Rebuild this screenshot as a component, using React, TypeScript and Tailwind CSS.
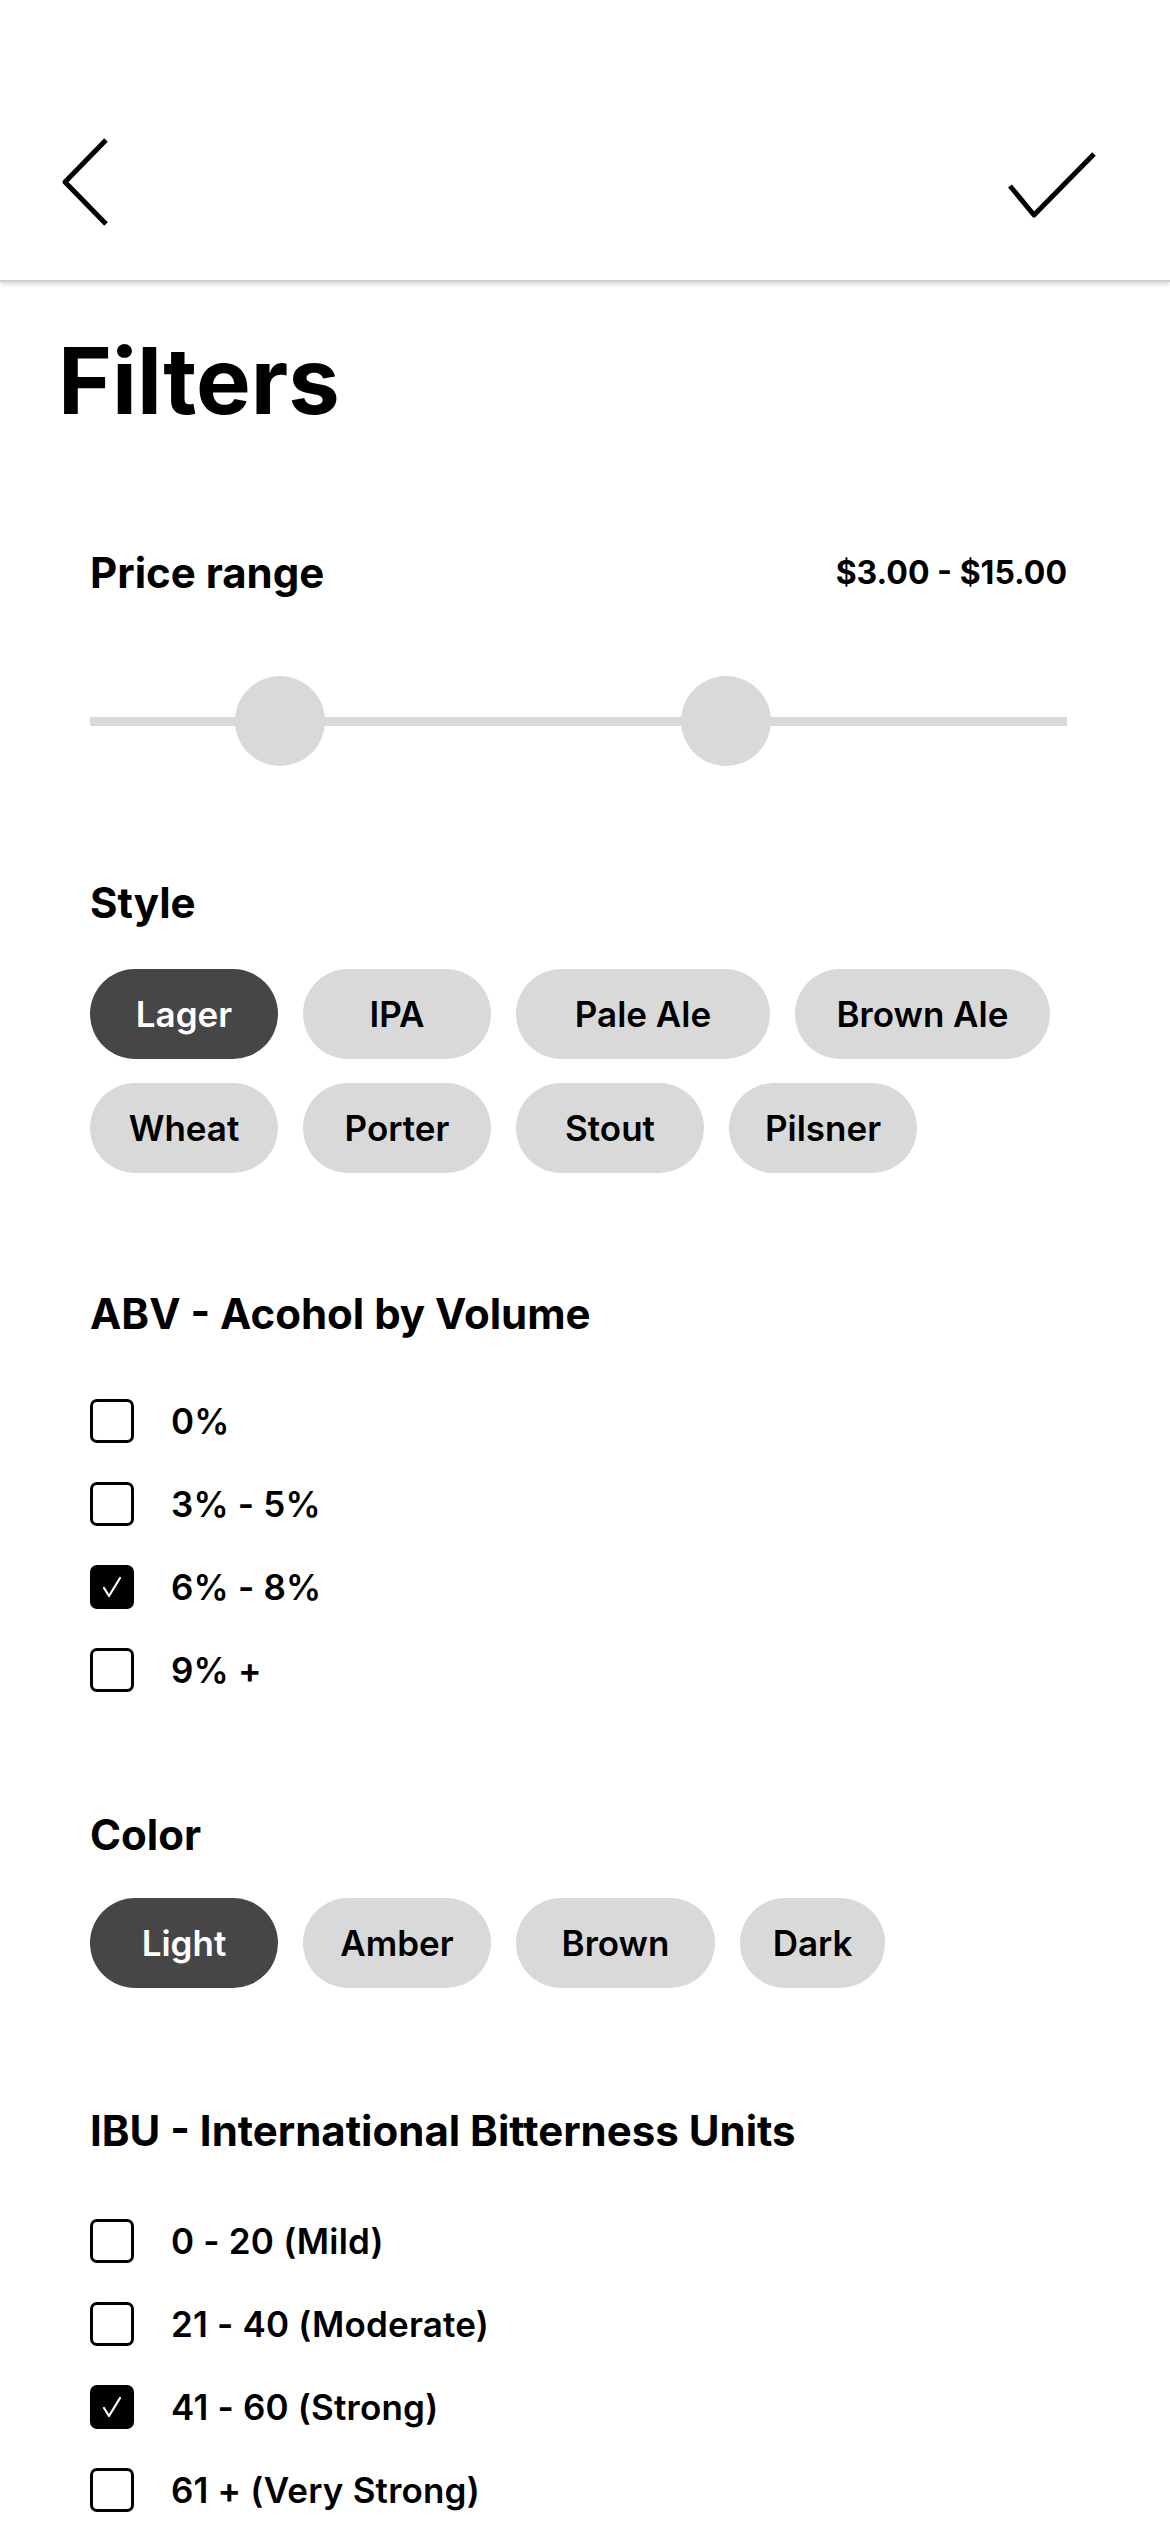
import { useState } from 'react'

const styles = [
  { label: 'Lager', w: 'w-[188px]' },
  { label: 'IPA', w: 'w-[188px]' },
  { label: 'Pale Ale', w: 'w-[254px]' },
  { label: 'Brown Ale', w: 'w-[255px]' },
  { label: 'Wheat', w: 'w-[188px]' },
  { label: 'Porter', w: 'w-[188px]' },
  { label: 'Stout', w: 'w-[188px]' },
  { label: 'Pilsner', w: 'w-[188px]' },
]

const colors = [
  { label: 'Light', w: 'w-[188px]' },
  { label: 'Amber', w: 'w-[188px]' },
  { label: 'Brown', w: 'w-[199px]' },
  { label: 'Dark', w: 'w-[145px]' },
]

const abv = ['0%', '3% - 5%', '6% - 8%', '9% +']
const ibu = ['0 - 20 (Mild)', '21 - 40 (Moderate)', '41 - 60 (Strong)', '61 + (Very Strong)']

function Chip({ label, w, active, onClick }: { label: string; w: string; active: boolean; onClick: () => void }) {
  return (
    <button
      onClick={onClick}
      className={`${w} h-[90px] rounded-full flex items-center justify-center text-[35px] font-semibold leading-none ${
        active ? 'bg-[#464646] text-white' : 'bg-[#d9d9d9] text-black'
      }`}
    >
      {label}
    </button>
  )
}

function CheckRow({ label, checked, onClick }: { label: string; checked: boolean; onClick: () => void }) {
  return (
    <button onClick={onClick} className="flex items-center gap-[37px] h-[44px] text-left">
      <span
        className={`w-[44px] h-[44px] rounded-[7px] border-[3px] border-black flex items-center justify-center shrink-0 ${
          checked ? 'bg-black' : 'bg-white'
        }`}
      >
        {checked && (
          <svg width="22" height="24" viewBox="0 0 22 24" fill="none">
            <path d="M3 13l5 8L19 3" stroke="white" strokeWidth="2.2" strokeLinecap="round" strokeLinejoin="round" />
          </svg>
        )}
      </span>
      <span className="text-[35px] font-semibold leading-none tracking-[0.2px] text-black">{label}</span>
    </button>
  )
}

export default function App() {
  const [style, setStyle] = useState('Lager')
  const [color, setColor] = useState('Light')
  const [abvSel, setAbvSel] = useState<string[]>(['6% - 8%'])
  const [ibuSel, setIbuSel] = useState<string[]>(['41 - 60 (Strong)'])

  const toggle = (list: string[], set: (v: string[]) => void, v: string) =>
    set(list.includes(v) ? list.filter((x) => x !== v) : [...list, v])

  return (
    <div className="min-h-[2532px] w-[1170px] bg-white text-black font-['Inter',sans-serif] overflow-hidden">
      {/* top bar */}
      <header className="h-[282px] border-b-[2px] border-[#cfcfcf] shadow-[0_3px_4px_rgba(0,0,0,0.12)] flex items-start justify-between pl-[60px] pr-[70px] pt-[136px]">
        <svg width="52" height="92" viewBox="0 0 52 92" fill="none">
          <path d="M46 4L5 46l41 42" stroke="black" strokeWidth="5" strokeLinejoin="round" />
        </svg>
        <svg width="96" height="70" viewBox="0 0 96 70" fill="none" className="mt-[14px]">
          <path d="M6 36l24 29L90 4" stroke="black" strokeWidth="5" strokeLinejoin="round" />
        </svg>
      </header>

      <h1 className="mt-[53px] ml-[58px] text-[92px] font-bold leading-none">Filters</h1>

      <div className="pl-[90px] pr-[103px]">
        {/* price */}
        <section className="mt-[125px]">
          <div className="flex items-center justify-between">
            <h2 className="text-[42px] font-bold leading-none">Price range</h2>
            <span className="text-[32px] font-bold leading-none">$3.00 - $15.00</span>
          </div>
          <div className="mt-[82px] relative h-[90px] flex items-center">
            <div className="w-full h-[9px] bg-[#d9d9d9]" />
            <div className="absolute left-[145px] top-0 w-[90px] h-[90px] rounded-full bg-[#d9d9d9]" />
            <div className="absolute left-[591px] top-0 w-[90px] h-[90px] rounded-full bg-[#d9d9d9]" />
          </div>
        </section>

        {/* style */}
        <section className="mt-[116px]">
          <h2 className="text-[42px] font-bold leading-none">Style</h2>
          <div className="mt-[45px] flex flex-wrap gap-x-[25px] gap-y-[24px] w-[980px]">
            {styles.map((s) => (
              <Chip key={s.label} label={s.label} w={s.w} active={style === s.label} onClick={() => setStyle(s.label)} />
            ))}
          </div>
        </section>

        {/* abv */}
        <section className="mt-[120px]">
          <h2 className="text-[42px] font-bold leading-none">ABV - Acohol by Volume</h2>
          <div className="mt-[64px] flex flex-col gap-[39px]">
            {abv.map((a) => (
              <CheckRow key={a} label={a} checked={abvSel.includes(a)} onClick={() => toggle(abvSel, setAbvSel, a)} />
            ))}
          </div>
        </section>

        {/* color */}
        <section className="mt-[122px]">
          <h2 className="text-[42px] font-bold leading-none">Color</h2>
          <div className="mt-[42px] flex flex-wrap gap-x-[25px] gap-y-[24px]">
            {colors.map((c) => (
              <Chip key={c.label} label={c.label} w={c.w} active={color === c.label} onClick={() => setColor(c.label)} />
            ))}
          </div>
        </section>

        {/* ibu */}
        <section className="mt-[122px]">
          <h2 className="text-[42px] font-bold leading-none">IBU - International Bitterness Units</h2>
          <div className="mt-[67px] flex flex-col gap-[39px]">
            {ibu.map((a) => (
              <CheckRow key={a} label={a} checked={ibuSel.includes(a)} onClick={() => toggle(ibuSel, setIbuSel, a)} />
            ))}
          </div>
        </section>
      </div>
    </div>
  )
}
